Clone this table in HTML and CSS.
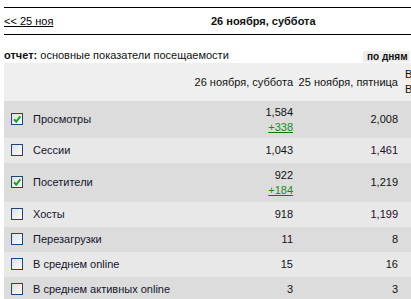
FILE: index.html
```html
<!DOCTYPE html>
<html lang="ru">
<head>
<meta charset="utf-8">
<title>Статистика</title>
<link rel="stylesheet" href="styles.css">
</head>
<body>
<div class="page">
  <div class="daybar">
    <a class="prev" href="#">&lt;&lt; 25 ноя</a>
    <span class="day">26 ноября, суббота</span>
  </div>
  <div class="report">
    <div class="report-title"><b>отчет:</b> основные показатели посещаемости</div>
    <span class="mode active">по дням</span>
    <span class="mode alt"></span>
  </div>
  <table class="stats">
    <colgroup>
      <col class="c-label"><col class="c-val"><col class="c-val2"><col class="c-more">
    </colgroup>
    <thead>
      <tr>
        <th></th>
        <th class="num">26 ноября, суббота</th>
        <th class="num">25 ноября, пятница</th>
        <th class="more">Всего<br>В среднем</th>
      </tr>
    </thead>
    <tbody>
      <tr class="dark r1">
        <td class="label"><span class="cb on"><svg viewBox="0 0 10 10"><path d="M2 5.2 L4.2 7.6 L8.3 2.4"/></svg></span>Просмотры</td>
        <td class="num">1,584<br><a class="diff" href="#">+338</a></td>
        <td class="num">2,008</td>
        <td></td>
      </tr>
      <tr class="light">
        <td class="label"><span class="cb"></span>Сессии</td>
        <td class="num">1,043</td>
        <td class="num purple">1,461</td>
        <td></td>
      </tr>
      <tr class="dark r3">
        <td class="label"><span class="cb on"><svg viewBox="0 0 10 10"><path d="M2 5.2 L4.2 7.6 L8.3 2.4"/></svg></span>Посетители</td>
        <td class="num">922<br><a class="diff" href="#">+184</a></td>
        <td class="num">1,219</td>
        <td></td>
      </tr>
      <tr class="light">
        <td class="label"><span class="cb"></span>Хосты</td>
        <td class="num">918</td>
        <td class="num purple">1,199</td>
        <td></td>
      </tr>
      <tr class="dark">
        <td class="label"><span class="cb"></span>Перезагрузки</td>
        <td class="num purple">11</td>
        <td class="num">8</td>
        <td></td>
      </tr>
      <tr class="light">
        <td class="label"><span class="cb"></span>В среднем online</td>
        <td class="num">15</td>
        <td class="num">16</td>
        <td></td>
      </tr>
      <tr class="dark">
        <td class="label"><span class="cb"></span>В среднем активных online</td>
        <td class="num">3</td>
        <td class="num">3</td>
        <td></td>
      </tr>
    </tbody>
  </table>
</div>
</body>
</html>
```

FILE: styles.css
```css
html, body {
  margin: 0;
  padding: 0;
  overflow: hidden;
  background: #fff;
}
body {
  font-family: "Liberation Sans", Arial, sans-serif;
  font-size: 11px;
  color: #111;
}
.page {
  padding: 7px 0 0 4px;
  width: 600px;
}
.daybar {
  border-top: 1px solid #000;
  border-bottom: 1px solid #000;
  height: 26px;
  display: grid;
  grid-template-columns: 207px auto;
  align-items: center;
  line-height: 14px;
}
.prev {
  color: #000;
  text-decoration: underline;
}
.day {
  font-weight: bold;
}
.report {
  margin-top: 13px;
  height: 14px;
  line-height: 14px;
  display: flex;
  align-items: center;
}
.report-title {
  flex: 0 0 359px;
  white-space: nowrap;
}
.mode {
  font-size: 10px;
  font-weight: bold;
  line-height: 11px;
  height: 11px;
  padding: 0 2px 0 4px;
  margin-top: 2px;
  white-space: nowrap;
}
.mode.active {
  background: #ececec;
}
.mode.alt {
  background: #ffffd8;
  width: 30px;
  margin-left: 1px;
}
.stats {
  margin-top: 1px;
  border-collapse: collapse;
  table-layout: fixed;
  width: 518px;
}
.c-label { width: 186px; }
.c-val { width: 107px; }
.c-val2 { width: 105px; }
.c-more { width: 120px; }
.stats th {
  background: #efefef;
  font-weight: normal;
  height: 38px;
  padding: 0 4px 0 0;
  line-height: 15px;
  white-space: nowrap;
}
.stats th.more {
  text-align: left;
  padding-left: 3px;
}
.stats td {
  padding: 0 4px 0 0;
  height: 25px;
  line-height: 15px;
  white-space: nowrap;
}
.stats tr.r1 td { height: 37px; }
.stats tr.r3 td { height: 39px; }
.num {
  text-align: right;
}
.purple {
  color: #2a0a2a;
}
.dark td { background: #dcdcdc; }
.light td { background: #e8e8e8; }
.stats td.label {
  padding-left: 7px;
  color: #14142e;
}
.cb {
  display: inline-block;
  box-sizing: border-box;
  width: 12px;
  height: 12px;
  border: 1px solid #1f4677;
  background: linear-gradient(135deg, #dedede, #ffffff);
  vertical-align: -2px;
  margin-right: 10px;
  position: relative;
}
.cb svg {
  position: absolute;
  left: 0;
  top: 0;
  width: 10px;
  height: 10px;
}
.cb svg path {
  fill: none;
  stroke: #1fa01f;
  stroke-width: 2;
}
.diff {
  color: #1a8a1a;
  text-decoration: underline;
  text-decoration-color: #0a7a0a;
}
```
